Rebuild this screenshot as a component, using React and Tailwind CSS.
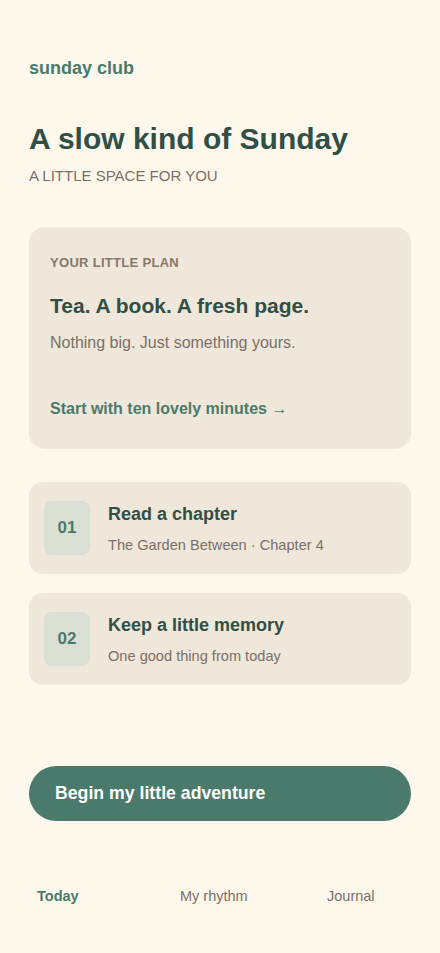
import React from 'react';

const items = [
  { num: '01', title: 'Read a chapter', sub: 'The Garden Between · Chapter 4' },
  { num: '02', title: 'Keep a little memory', sub: 'One good thing from today' },
];

function App() {
  return (
    <div className="min-h-screen bg-[#fdf7ec] font-['Liberation_Sans',Arial,sans-serif] px-[29px] pt-[58px] pb-8">
      {/* Brand */}
      <div className="text-[18px] leading-[20px] font-bold text-[#4a7a6c]">sunday club</div>

      {/* Hero */}
      <h1 className="mt-[43px] text-[30px] leading-[36px] font-bold text-[#2f4f47]">A slow kind of Sunday</h1>
      <p className="mt-[10px] text-[15px] leading-[18px] text-[#7a7068] uppercase">A little space for you</p>

      {/* Plan card */}
      <div className="mt-[42px] bg-[#efe7da] rounded-[16px] px-[21px] pt-[28px] pb-[30px]">
        <div className="text-[13px] leading-[16px] font-bold tracking-[0.3px] text-[#85786b] uppercase">Your little plan</div>
        <div className="mt-[22px] text-[21px] leading-[26px] font-bold text-[#2f4f47]">Tea. A book. A fresh page.</div>
        <div className="mt-[14px] text-[16px] leading-[20px] text-[#7a7068]">Nothing big. Just something yours.</div>
        <div className="mt-[46px] text-[16px] leading-[20px] font-bold text-[#4a7a6c]">Start with ten lovely minutes →</div>
      </div>

      {/* Steps */}
      <div className="mt-[33px] flex flex-col gap-[19px]">
        {items.map((it) => (
          <div key={it.num} className="bg-[#efe7da] rounded-[14px] h-[92px] px-[15px] flex items-center gap-[18px]">
            <div className="w-[46px] h-[54px] rounded-[8px] bg-[#d9e0d3] flex items-center justify-center text-[17px] font-bold text-[#4a7a6c]">
              {it.num}
            </div>
            <div className="flex flex-col">
              <div className="text-[18px] leading-[22px] font-bold text-[#2f4f47]">{it.title}</div>
              <div className="mt-[11px] text-[14.6px] leading-[18px] text-[#7a7068]">{it.sub}</div>
            </div>
          </div>
        ))}
      </div>

      {/* CTA */}
      <button className="mt-[81px] w-full h-[55px] rounded-full bg-[#4a7a6c] text-left px-[26px] text-[17.7px] font-bold text-white">
        Begin my little adventure
      </button>

      {/* Nav */}
      <nav className="mt-[66px] pl-[8px] grid grid-cols-[143px_147px_1fr] text-[14.5px] leading-[18px]">
        <span className="font-bold text-[#4a7a6c]">Today</span>
        <span className="text-[#7a7068]">My rhythm</span>
        <span className="text-[#7a7068]">Journal</span>
      </nav>
    </div>
  );
}

export default App;
